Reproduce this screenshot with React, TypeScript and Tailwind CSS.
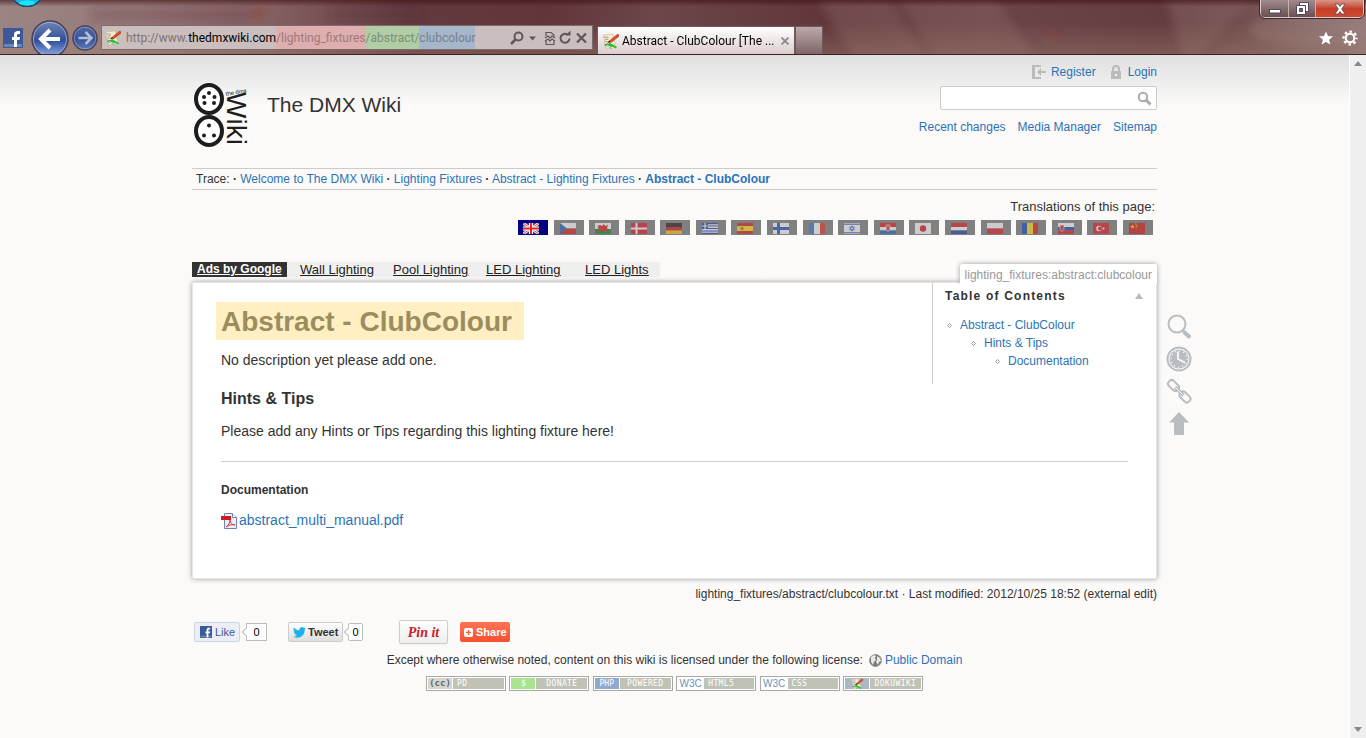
import React from "react";

type IconProps = { className?: string };

const linkStyle = "text-[#2b73b7] hover:underline";

const PencilIcon = ({ className }: IconProps) => (
    <svg viewBox="0 0 16 16" className={className}>
        <path d="M1 2l9-1 3 12-9 2z" fill="#f4ecd0" stroke="#c9b98c" strokeWidth=".6" />
        <path d="M2 4h4M3 6h3M3 8h2" stroke="#8a8a8a" strokeWidth=".8" />
        <path d="M15 1L8 6.500l-2.500 2.500 3.500-.5L16 3z" fill="#e8502b" stroke="#9b2d12" strokeWidth=".6" />
        <path d="M5.500 9l1.500-2 1 1.200z" fill="#222" />
        <path d="M2 11c3-2 5-1 8 1l-1 3-3-2c-1.500-.5-3-.5-4-2z" fill="#3aa63a" />
        <path d="M7 9l7 4-1 1.500-7-4z" fill="#2fc12f" />
        <path d="M4 11.500l6 2.500" stroke="#fff" strokeWidth=".8" />
    </svg>
);

const FacebookIcon = ({ className }: IconProps) => (
    <svg viewBox="0 0 20 20" className={className}>
        <rect width="20" height="20" fill="#3b5998" />
        <rect y="16" x="1" width="18" height="3" fill="#6d84b4" />
        <path d="M11 19v-7H9V9h2V7c0-3 1.500-4 4-4h2v3h-1.500C14.300 6 14 6.500 14 7.500V9h3l-.4 3H14v7z" fill="#fff" />
    </svg>
);

const ChromeBackground = () => (
    <svg
        viewBox="0 0 1366 55"
        preserveAspectRatio="none"
        className="absolute inset-0 -z-10 h-full w-full"
    >
        <defs>
            <linearGradient id="glass">
                <stop offset="0" stopColor="#9b8583" />
                <stop offset=".1" stopColor="#967a79" />
                <stop offset=".2" stopColor="#845f61" />
                <stop offset=".3" stopColor="#623a3e" />
                <stop offset=".4" stopColor="#61363b" />
                <stop offset=".48" stopColor="#6c464a" />
                <stop offset=".6" stopColor="#61373b" />
                <stop offset=".72" stopColor="#6c4549" />
                <stop offset=".85" stopColor="#653d41" />
                <stop offset=".93" stopColor="#785655" />
                <stop offset="1" stopColor="#93797a" />
            </linearGradient>
            <linearGradient id="shade" x2="0" y2="1">
                <stop offset="0" stopColor="#3d0f12" stopOpacity=".6" />
                <stop offset=".12" stopColor="#3d0f12" stopOpacity="0" />
                <stop offset=".4" stopColor="#a08070" stopOpacity="0" />
                <stop offset="1" stopColor="#a08070" stopOpacity=".4" />
            </linearGradient>
            <filter id="soft" x="-20%" y="-50%" width="140%" height="200%">
                <feGaussianBlur stdDeviation="4" />
            </filter>
        </defs>
        <rect width="1366" height="55" fill="url(#glass)" />
        <g filter="url(#soft)">
            <path d="M90 8h160v14H90zM330 8h90v12h-90z" fill="#552c30" opacity=".2" />
            <path d="M815-5h72l42 65h-74z" fill="#85605f" opacity=".45" />
            <path d="M895-5h100l40 65H935z" fill="#85605f" opacity=".45" />
            <path d="M1165-5h90l-60 65h-10z" fill="#8a6866" opacity=".4" />
            <ellipse cx="1310" cy="30" rx="60" ry="18" fill="#a58c8b" opacity=".3" />
            <circle cx="258" cy="13" r="6" fill="#8b3c28" opacity=".5" />
            <circle cx="1053" cy="38" r="5" fill="#8f2b35" opacity=".6" />
            <circle cx="1050" cy="44" r="4" fill="#3a6a43" opacity=".5" />
        </g>
        <rect width="1366" height="55" fill="url(#shade)" />
        <circle cx="27" cy="-10" r="16.500" fill="#1cb5e4" stroke="#1b4a6b" strokeWidth="1.500" />
        <ellipse cx="27" cy="3" rx="8" ry="2.500" fill="#19e6ff" />
    </svg>
);

const urlParts = [
    { text: "http://www.", style: "text-[#7d7373]" },
    { text: "thedmxwiki.com", style: "text-black" },
    { text: "/lighting_fixtures", style: "bg-[#dfaeae] text-[#9d7b7b]" },
    { text: "/abstract/", style: "bg-[#b0cda6] text-[#7b8f76]" },
    { text: "clubcolour", style: "bg-[#a6b6cb] text-[#76808f]" },
];

const BrowserChrome = () => (
    <header className="relative isolate flex h-[55px] items-end overflow-hidden border-b border-[#3b2024] pl-[3px] font-[Roboto,'Open_Sans',sans-serif] text-[12px]">
        <ChromeBackground />
        <button aria-label="Facebook" className="mb-[6px] h-[20px] w-[20px] shrink-0 rounded-sm">
            <FacebookIcon className="h-[20px] w-[20px]" />
        </button>
        <button aria-label="Back" className="-mb-[2px] ml-[8px] h-[36px] w-[38px] shrink-0">
            <svg viewBox="0 0 38 36" className="h-[36px] w-[38px]">
                <defs>
                    <linearGradient id="back" x2="0" y2="1">
                        <stop offset="0" stopColor="#7286b6" />
                        <stop offset=".5" stopColor="#37539a" />
                        <stop offset=".55" stopColor="#2f4f9c" />
                        <stop offset="1" stopColor="#93b0e6" />
                    </linearGradient>
                </defs>
                <circle cx="19" cy="19" r="18" fill="url(#back)" stroke="#4a4156" strokeWidth="1.500" />
                <circle cx="19" cy="19" r="16.500" fill="none" stroke="#b3bddb" strokeOpacity=".7" />
                <path d="M19 10l-9 9 9 9M10.500 19h18.500" fill="none" stroke="#fff" strokeWidth="4" />
            </svg>
        </button>
        <button aria-label="Forward" className="mb-[3px] ml-[3px] h-[26px] w-[26px] shrink-0">
            <svg viewBox="0 0 26 26" className="h-[26px] w-[26px]">
                <circle cx="13" cy="13" r="12" fill="url(#back)" stroke="#4a4156" strokeWidth="1.500" />
                <circle cx="13" cy="13" r="10.800" fill="#3c5799" fillOpacity=".6" stroke="#98a6cd" strokeOpacity=".6" />
                <path d="M13.500 7l6 6-6 6M19 13H6.500" fill="none" stroke="#b4bdd3" strokeWidth="2.500" />
            </svg>
        </button>
        <div className="mb-[4px] ml-[3px] flex h-[25px] w-[492px] shrink-0 items-center border border-[#7d6b6c] bg-[#cbbebe]">
            <PencilIcon className="mx-[3px] h-[16px] w-[16px]" />
            <div className="flex h-full pl-[2px]">
                {urlParts.map(({ text, style }) => (
                    <span key={text} className={`flex h-full items-center ${style}`}>
                        {text}
                    </span>
                ))}
            </div>
            <svg viewBox="0 0 80 16" className="mr-[3px] ml-auto h-[16px] w-[80px]" fill="none" stroke="#5f5757" strokeWidth="2">
                <circle cx="9.500" cy="6.500" r="4" />
                <path d="M6.500 9.500L2 14" strokeWidth="2.500" />
                <path d="M20 6.500h7l-3.500 4z" fill="#5f5757" stroke="none" />
                <path d="M37 6V2.500h5l3 2.500v1.500M36 8l3-2 2 2 2-2 3 2M36 11l3-2 2 2 2-2 3 2M37 10.500v4h8v-4" strokeWidth="1.200" />
                <path d="M60.500 8.500a4.500 4.500 0 1 1-2-4" />
                <path d="M56.500 5.500h5v-5z" fill="#5f5757" stroke="none" />
                <path d="M68 3.500l9 9M77 3.500l-9 9" strokeWidth="2.200" />
            </svg>
        </div>
        <div className="ml-[4px] flex h-[28px] w-[198px] shrink-0 items-center border border-b-0 border-[#6b5a5b] bg-linear-to-b from-white to-[#dccdce] pt-[1px] pl-[4px]">
            <PencilIcon className="mr-[3px] h-[17px] w-[17px] shrink-0" />
            <span className="text-black whitespace-nowrap">Abstract - ClubColour [The ...</span>
            <button aria-label="Close tab" className="mr-[5px] ml-auto">
                <svg viewBox="0 0 8 8" className="h-[8px] w-[8px]">
                    <path d="M.5.5l7 7M7.500.5l-7 7" stroke="#8f8787" strokeWidth="1.800" />
                </svg>
            </button>
        </div>
        <button
            aria-label="New tab"
            className="h-[28px] w-[28px] shrink-0 border border-b-0 border-[#6b5a5b] bg-linear-to-b from-[#bba9aa] to-[#7f6668]"
        />
        <div className="ml-auto flex flex-col items-end self-stretch">
            <div className="mr-[2px] flex h-[18px] w-[104px] overflow-hidden rounded-b-[5px] border border-t-0 border-[#d9cccc] outline outline-[#3f2628]">
                <button aria-label="Minimize" className="flex w-[28px] items-center justify-center border-r border-[#c4b3b3] bg-linear-to-b from-[#a08c8d] to-[#6a4f51]">
                    <svg viewBox="0 0 12 12" className="h-[12px] w-[12px]">
                        <rect x=".5" y="6.500" width="11" height="3.500" fill="#fff" stroke="#4f4a5c" />
                    </svg>
                </button>
                <button aria-label="Restore" className="flex w-[27px] items-center justify-center border-r border-[#c4b3b3] bg-linear-to-b from-[#a08c8d] to-[#6a4f51]">
                    <svg viewBox="0 0 13 13" className="h-[13px] w-[13px]" fill="#fff" stroke="#4f4a5c">
                        <path d="M3.500.5h9v9h-9z" />
                        <path d="M.5 3.500h9v9h-9z" />
                        <path d="M3.500 6.500h3v3h-3z" fill="#7b6263" />
                    </svg>
                </button>
                <button aria-label="Close" className="flex flex-1 items-center justify-center bg-linear-to-b from-[#d9958a] via-[#c4402c] to-[#d2492f]">
                    <svg viewBox="0 0 12 12" className="h-[12px] w-[12px]">
                        <path d="M1 1h3.200L6 3.500 7.800 1H11L7.700 6l3.300 5H7.800L6 8.500 4.200 11H1l3.300-5z" fill="#fff" stroke="#4f4a5c" strokeWidth=".8" />
                    </svg>
                </button>
            </div>
            <div className="mt-[12px] mr-[8px] flex gap-[8px]">
                <button aria-label="Favorites">
                    <svg viewBox="0 0 16 16" className="h-[16px] w-[16px]">
                        <path d="M8 .5l2.200 5.200 5.600.4-4.300 3.700 1.400 5.500L8 12.300l-4.900 3 1.400-5.500L.2 6.100l5.600-.4z" fill="#fff" stroke="#6b5557" strokeWidth=".5" />
                    </svg>
                </button>
                <button aria-label="Tools">
                    <svg viewBox="0 0 16 16" className="h-[16px] w-[16px]" fill="none" stroke="#fff">
                        <circle cx="8" cy="8" r="4.300" strokeWidth="2.200" />
                        <circle cx="8" cy="8" r="6.500" strokeWidth="2.200" strokeDasharray="2.600 2.505" strokeDashoffset="1.300" />
                    </svg>
                </button>
            </div>
        </div>
    </header>
);

const Logo = () => (
    <svg viewBox="0 0 58 66" className="h-[66px] w-[58px] overflow-visible" fill="#1f1c1d">
        <ellipse cx="17" cy="16" rx="13" ry="14" fill="#fff" stroke="#1f1c1d" strokeWidth="4" />
        <ellipse cx="17" cy="48" rx="13" ry="14" fill="#fff" stroke="#1f1c1d" strokeWidth="4" />
        <circle cx="17" cy="10" r="2" />
        <circle cx="12" cy="14" r="2" />
        <circle cx="22.500" cy="14" r="2" />
        <circle cx="12.500" cy="20" r="2" />
        <circle cx="22" cy="20" r="2" />
        <circle cx="17" cy="42.500" r="2" />
        <circle cx="12" cy="52.500" r="2" />
        <circle cx="22" cy="52.500" r="2" />
        <text transform="translate(35 9) rotate(90)" fontFamily="Liberation Sans, sans-serif" fontSize="28">
            Wiki
        </text>
        <text transform="translate(34 13) rotate(-10)" fontFamily="Liberation Sans, sans-serif" fontSize="6">
            the dmx
        </text>
    </svg>
);

const SiteHeader = () => (
    <div className="flex justify-between pt-2 text-[12px] leading-[18px]">
        <div className="flex items-start pt-[20px]">
            <Logo />
            <h1 className="mt-[9px] ml-[17px] text-[21px] leading-[26px] text-[#333]">The DMX Wiki</h1>
        </div>
        <div className="flex flex-col items-end">
            <div className="flex">
                <a href="#register" className={`flex items-center ${linkStyle}`}>
                    <svg viewBox="0 0 14 14" className="mr-[5px] h-[14px] w-[14px]" fill="#bbb">
                        <path d="M0 0h9v2H3v10h6v2H0z" />
                        <path d="M5 7l4-4v3h5v2H9v3z" />
                    </svg>
                    Register
                </a>
                <a href="#login" className={`ml-[15px] flex items-center ${linkStyle}`}>
                    <svg viewBox="0 0 10 14" className="mr-[7px] h-[14px] w-[10px]" fill="#bbb">
                        <path d="M2 7V4a3 3 0 0 1 6 0v3" fill="none" stroke="#bbb" strokeWidth="2" />
                        <path d="M0 6h10v8H0z" />
                        <path d="M4 9h2v2H4z" fill="#f5f5f4" />
                    </svg>
                    Login
                </a>
            </div>
            <form className="mt-[5px] flex h-[24px] w-[217px] items-center rounded-[2px] border border-[#ccc] bg-white">
                <input type="text" aria-label="Search" className="h-full min-w-0 flex-1 px-1 outline-none" />
                <button type="button" aria-label="Search" className="mr-[4px]">
                    <svg viewBox="0 0 15 15" className="h-[15px] w-[15px]" fill="none" stroke="#aaa">
                        <circle cx="6" cy="6" r="4.200" strokeWidth="2" />
                        <path d="M9 9l4.500 4.500" strokeWidth="3" />
                    </svg>
                </button>
            </form>
            <nav className="mt-2 flex gap-3">
                <a href="#recent" className={linkStyle}>Recent changes</a>
                <a href="#media" className={linkStyle}>Media Manager</a>
                <a href="#index" className={linkStyle}>Sitemap</a>
            </nav>
        </div>
    </div>
);

const trace = ["Welcome to The DMX Wiki", "Lighting Fixtures", "Abstract - Lighting Fixtures"];

const Breadcrumbs = () => (
    <nav className="mt-[19px] h-[22px] border-y border-[#ccc] px-1 text-[12px] leading-5">
        Trace:{" "}
        {trace.map((page) => (
            <React.Fragment key={page}>
                <span className="font-bold">·</span>{" "}
                <a href="#trace" className={linkStyle}>{page}</a>{" "}
            </React.Fragment>
        ))}
        <span className="font-bold">·</span>{" "}
        <a href="#current" className={`font-bold ${linkStyle}`}>Abstract - ClubColour</a>
    </nav>
);

const flags: { name: string; art: React.ReactNode }[] = [
    {
        name: "English",
        art: (
            <>
                <path d="M0 0h16v11H0z" fill="#2b3fa0" />
                <path d="M0 0l16 11M16 0L0 11" stroke="#fff" strokeWidth="2.500" />
                <path d="M0 0l16 11M16 0L0 11" stroke="#e33" strokeWidth="1" />
                <path d="M8 0v11M0 5.500h16" stroke="#fff" strokeWidth="4" />
                <path d="M8 0v11M0 5.500h16" stroke="#e22" strokeWidth="2" />
            </>
        ),
    },
    {
        name: "Czech",
        art: (
            <>
                <path d="M0 0h16v5.500H0z" fill="#fff" />
                <path d="M0 5.500h16V11H0z" fill="#e02020" />
                <path d="M0 0l7 5.500L0 11z" fill="#2a62b4" />
            </>
        ),
    },
    {
        name: "Welsh",
        art: (
            <>
                <path d="M0 0h16v6H0z" fill="#fff" />
                <path d="M0 6h16v5H0z" fill="#1b8a2b" />
                <path d="M2 3l3-1 2 1 2-2 1 2 3-1-1 3 2 2-2 2-2-2-2 2-3-1-2 1 1-3-2-1 2-1z" fill="#d22" />
            </>
        ),
    },
    {
        name: "Danish",
        art: (
            <>
                <path d="M0 0h16v11H0z" fill="#dd1c2c" />
                <path d="M5.500 0v11M0 5.500h16" stroke="#fff" strokeWidth="2" />
            </>
        ),
    },
    {
        name: "German",
        art: (
            <>
                <path d="M0 0h16v4H0z" fill="#222" />
                <path d="M0 4h16v3.500H0z" fill="#e01818" />
                <path d="M0 7.500h16V11H0z" fill="#f5c51c" />
            </>
        ),
    },
    {
        name: "Greek",
        art: (
            <>
                <path d="M0 0h16v11H0z" fill="#fff" />
                <path d="M0 .6h16M0 3h16M0 5.500h16M0 8h16M0 10.400h16" stroke="#2443b8" strokeWidth="1.200" />
                <path d="M0 0h6v6H0z" fill="#2443b8" />
                <path d="M3 0v6M0 3h6" stroke="#fff" strokeWidth="1.200" />
            </>
        ),
    },
    {
        name: "Spanish",
        art: (
            <>
                <path d="M0 0h16v11H0z" fill="#dd2020" />
                <path d="M0 3h16v5H0z" fill="#ffe01c" />
                <circle cx="5" cy="5.500" r="1.700" fill="#c9731c" />
            </>
        ),
    },
    {
        name: "Finnish",
        art: (
            <>
                <path d="M0 0h16v11H0z" fill="#fff" />
                <path d="M5.500 0v11M0 5.500h16" stroke="#2858b8" strokeWidth="3" />
            </>
        ),
    },
    {
        name: "French",
        art: (
            <>
                <path d="M0 0h16v11H0z" fill="#fff" />
                <path d="M0 0h5v11H0z" fill="#3f78cf" />
                <path d="M11 0h5v11h-5z" fill="#e23a2a" />
            </>
        ),
    },
    {
        name: "Hebrew",
        art: (
            <>
                <path d="M0 0h16v11H0z" fill="#fff" />
                <path d="M0 1.200h16M0 9.800h16" stroke="#2b50b8" />
                <path d="M8 2.800l2.300 4H5.700zM8 8.200l2.300-4H5.700z" fill="none" stroke="#3b62cc" strokeWidth=".8" />
            </>
        ),
    },
    {
        name: "Croatian",
        art: (
            <>
                <path d="M0 0h16v4H0z" fill="#e02020" />
                <path d="M0 4h16v3.500H0z" fill="#fff" />
                <path d="M0 7.500h16V11H0z" fill="#2068b8" />
                <path d="M6 2h4v5L8 8.500 6 7z" fill="#e04a3a" stroke="#fff" strokeWidth=".6" />
            </>
        ),
    },
    {
        name: "Japanese",
        art: (
            <>
                <path d="M0 0h16v11H0z" fill="#fff" />
                <circle cx="8" cy="5.500" r="3.200" fill="#d81c2c" />
            </>
        ),
    },
    {
        name: "Dutch",
        art: (
            <>
                <path d="M0 0h16v4H0z" fill="#e02020" />
                <path d="M0 4h16v3.500H0z" fill="#fff" />
                <path d="M0 7.500h16V11H0z" fill="#1c4aa8" />
            </>
        ),
    },
    {
        name: "Polish",
        art: (
            <>
                <path d="M0 0h16v5.500H0z" fill="#fff" />
                <path d="M0 5.500h16V11H0z" fill="#e02030" />
            </>
        ),
    },
    {
        name: "Romanian",
        art: (
            <>
                <path d="M0 0h16v11H0z" fill="#ffe01c" />
                <path d="M0 0h5v11H0z" fill="#1c48c0" />
                <path d="M11 0h5v11h-5z" fill="#e02020" />
            </>
        ),
    },
    {
        name: "Slovenian",
        art: (
            <>
                <path d="M0 0h16v4H0z" fill="#fff" />
                <path d="M0 4h16v3.500H0z" fill="#2048c0" />
                <path d="M0 7.500h16V11H0z" fill="#e02020" />
                <path d="M2 2h4v4.500L4 8.500l-2-2z" fill="#e03030" stroke="#fff" strokeWidth=".6" />
            </>
        ),
    },
    {
        name: "Turkish",
        art: (
            <>
                <path d="M0 0h16v11H0z" fill="#e02028" />
                <circle cx="6" cy="5.500" r="2.800" fill="#fff" />
                <circle cx="6.900" cy="5.500" r="2" fill="#e02028" />
                <circle cx="10.500" cy="5.500" r="1.100" fill="#fff" />
            </>
        ),
    },
    {
        name: "Chinese",
        art: (
            <>
                <path d="M0 0h16v11H0z" fill="#d81c1c" />
                <path d="M3.500 1.500l.7 1.500h1.600L4.500 4l.5 1.600-1.500-1L2 5.600 2.500 4 1.200 3h1.600z" fill="#ffe01c" />
                <path d="M6 1h1.500M7 3h1.500M6.500 5h1" stroke="#ffe01c" />
            </>
        ),
    },
];

const Translations = () => (
    <div className="mt-2 flex flex-col items-end">
        <p className="mr-[2px] text-[13px] leading-[18px]">Translations of this page:</p>
        <ul className="mt-1 mr-[4px] flex w-[635px] justify-between">
            {flags.map(({ name, art }) => {
                const isCurrent = name === "English";
                return (
                    <li key={name}>
                        <a
                            href={`#${name}`}
                            aria-label={name}
                            className={`flex h-[15px] w-[30px] items-center pt-[2px] ${
                                isCurrent ? "bg-[#000080] pl-[5px]" : "bg-[#808080] pl-[6px]"
                            }`}
                        >
                            <svg viewBox="0 0 16 11" className={`h-[11px] w-[16px] ${isCurrent ? "" : "opacity-60"}`}>
                                {art}
                            </svg>
                        </a>
                    </li>
                );
            })}
        </ul>
    </div>
);

const AdLinks = () => (
    <div className="mt-[27px] flex h-[15px] w-[468px] bg-[#efefef] text-[13px] leading-[15px] text-[#222] underline">
        <a href="#ads" className="mr-[13px] w-[95px] bg-[#333] pl-[5px] text-[12px] font-bold text-white">
            Ads by Google
        </a>
        <a href="#wall" className="w-[93px]">Wall Lighting</a>
        <a href="#pool" className="w-[93px]">Pool Lighting</a>
        <a href="#led" className="w-[99px]">LED Lighting</a>
        <a href="#lights">LED Lights</a>
    </div>
);

const TocItem = ({ label, children }: { label: string; children?: React.ReactNode }) => (
    <li>
        <div className="flex items-center">
            <svg viewBox="0 0 5 5" className="mr-[8px] h-[5px] w-[5px]">
                <path d="M2.500.5l2 2-2 2-2-2z" fill="none" stroke="#999" />
            </svg>
            <a href="#section" className={linkStyle}>{label}</a>
        </div>
        {children && <ul className="pl-[24px]">{children}</ul>}
    </li>
);

const TableOfContents = () => (
    <aside className="h-[101px] w-[224px] shrink-0 border-l border-[#ccc] pl-[12px] text-[12px] leading-[18px]">
        <h3 className="flex items-center justify-between pt-[4px] pr-[13px] font-bold tracking-widest">
            Table of Contents
            <svg viewBox="0 0 8 6" className="h-[6px] w-[8px]">
                <path d="M4 0l4 6H0z" fill="#bbb" />
            </svg>
        </h3>
        <ul className="mt-[11px] pl-[2px]">
            <TocItem label="Abstract - ClubColour">
                <TocItem label="Hints & Tips">
                    <TocItem label="Documentation" />
                </TocItem>
            </TocItem>
        </ul>
    </aside>
);

const PageTools = () => (
    <nav className="flex w-[26px] flex-col gap-[6px] pt-[32px]">
        <a href="#source" aria-label="Show pagesource">
            <svg viewBox="0 0 26 26" className="h-[26px] w-[26px]" fill="none" stroke="#b9bcc1">
                <circle cx="11" cy="10" r="8.500" strokeWidth="2" />
                <path d="M16.500 16l3 3" strokeWidth="2" />
                <path d="M18.500 18.500l4.500 4" strokeWidth="4" strokeLinecap="round" />
            </svg>
        </a>
        <a href="#revisions" aria-label="Old revisions">
            <svg viewBox="0 0 26 26" className="h-[26px] w-[26px]" fill="none" stroke="#b9bcc1">
                <circle cx="13" cy="13" r="11.500" strokeWidth="2" />
                <circle cx="13" cy="13" r="9.500" fill="#b9bcc1" stroke="none" />
                <circle cx="13" cy="13" r="8" stroke="#fbfaf9" strokeWidth="1.500" strokeDasharray="1 3.189" />
                <path d="M12 5.500V13l7 3.500" stroke="#fbfaf9" strokeWidth="1.800" />
            </svg>
        </a>
        <a href="#backlinks" aria-label="Backlinks">
            <svg viewBox="0 0 26 26" className="h-[26px] w-[26px]" fill="none" stroke="#b9bcc1" strokeWidth="2">
                <rect x="-6" y="-3.500" width="12" height="7" rx="3" transform="translate(7.500 7.500) rotate(45)" />
                <rect x="-6" y="-3.500" width="12" height="7" rx="3" transform="translate(19 19) rotate(45)" />
                <path d="M9 9l8.500 8.500" strokeWidth="3.500" />
                <path d="M9 9l8.500 8.500" stroke="#fbfaf9" strokeWidth="1" />
            </svg>
        </a>
        <a href="#top" aria-label="Back to top">
            <svg viewBox="0 0 26 26" className="h-[26px] w-[26px]">
                <path d="M13 2l10 10.500h-5V25H8V12.500H3z" fill="#b9bcc1" />
            </svg>
        </a>
    </nav>
);

const PageContent = () => (
    <div className="mt-[5px] -mr-[35px] flex gap-[9px]">
        <main className="relative flex flex-1 justify-between rounded-[2px] border border-[#e6e6e6] bg-white shadow-[0_0_5px_#999]">
            <div className="absolute -top-[19px] -right-px h-[20px] overflow-hidden rounded-t-[2px] bg-white px-[5px] text-[12px] leading-[22px] text-[#999] shadow-[0_0_5px_#999] [clip-path:inset(-5px_-5px_0_-5px)]">
                lighting_fixtures:abstract:clubcolour
            </div>
            <div className="min-w-0 flex-1 pt-[19px] pb-[47px] pl-[28px] text-[14px] leading-[21px]">
                <h1 className="-ml-[5px] w-fit bg-[#ffefc3] pt-[2px] pr-[12px] pl-[5px] text-[28px] leading-[36px] font-bold text-[#9c8d5f]">
                    Abstract - ClubColour
                </h1>
                <p className="mt-[10px]">No description yet please add one.</p>
                <h2 className="mt-[17px] text-[16px] leading-[22px] font-bold">Hints &amp; Tips</h2>
                <p className="mt-[11px]">Please add any Hints or Tips regarding this lighting fixture here!</p>
                <hr className="mt-[19px] -mr-[196px] border-[#ccc]" />
                <h3 className="mt-[19px] text-[12px] leading-[18px] font-bold">Documentation</h3>
                <a href="#pdf" className={`mt-[11px] flex w-fit items-center ${linkStyle}`}>
                    <svg viewBox="0 0 16 16" className="mr-[2px] h-[16px] w-[16px]">
                        <path d="M3.500.5h8l4 4v11h-12z" fill="#e8eefb" stroke="#7183a8" />
                        <path d="M11.500.5v4h4" fill="#fff" stroke="#7183a8" />
                        <path d="M0 3h10v4H0z" fill="#d41a1a" />
                        <path d="M5 14c3-2 4-5 4-7 0 3 2 5 5 5-3-1-6 0-9 2z" fill="none" stroke="#e03a3a" />
                    </svg>
                    abstract_multi_manual.pdf
                </a>
            </div>
            <TableOfContents />
        </main>
        <PageTools />
    </div>
);

const CountBubble = ({ className }: IconProps) => (
    <span className={`relative flex h-[18px] items-center justify-center border border-[#bbb] bg-white text-[11px] text-black ${className}`}>
        <span className="absolute top-[5px] -left-[4px] h-[6px] w-[6px] rotate-45 border-b border-l border-[#bbb] bg-white" />
        0
    </span>
);

const ShareButtons = () => (
    <div className="mt-[17px] ml-[2px] flex h-[24px] items-center text-[11px]">
        <button className="flex h-[20px] w-[46px] items-center rounded-[2px] border border-[#cad4e7] bg-[#eceef5] pl-[5px] text-[#3b5998]">
            <FacebookIcon className="mr-[3px] h-[12px] w-[12px]" />
            Like
        </button>
        <CountBubble className="ml-[6px] w-[21px]" />
        <button className="ml-[21px] flex h-[20px] w-[55px] items-center rounded-[2px] border border-[#ccc] bg-linear-to-b from-white to-[#dedede] pl-[4px] font-bold text-[#333]">
            <svg viewBox="0 0 24 20" className="mr-[2px] h-[11px] w-[13px] shrink-0">
                <path d="M24 2.400a9.800 9.800 0 0 1-2.800.8A4.900 4.900 0 0 0 23.300.5a9.900 9.900 0 0 1-3.100 1.200 4.900 4.900 0 0 0-8.400 4.500A14 14 0 0 1 1.700 1.100a4.900 4.900 0 0 0 1.500 6.500 4.900 4.900 0 0 1-2.200-.6 4.900 4.900 0 0 0 3.900 4.900 5 5 0 0 1-2.200.1 4.900 4.900 0 0 0 4.600 3.400A9.900 9.900 0 0 1 0 17.500 14 14 0 0 0 21.500 5 10 10 0 0 0 24 2.400z" fill="#1bb0e8" />
            </svg>
            Tweet
        </button>
        <CountBubble className="ml-[5px] w-[15px] rounded-[2px]" />
        <button className="ml-[36px] h-[24px] w-[49px] rounded-[2px] border border-[#ccc] bg-linear-to-b from-white to-[#eee] font-['Liberation_Serif',serif] text-[14px] font-bold text-[#cb2027] italic shadow-xs">
            Pin it
        </button>
        <button className="ml-[12px] flex h-[20px] w-[50px] items-center rounded-[2px] bg-linear-to-b from-[#fc7354] to-[#f8502c] pl-[4px] font-bold text-white">
            <svg viewBox="0 0 9 9" className="mr-[3px] h-[9px] w-[9px] shrink-0">
                <rect width="9" height="9" rx="2" fill="#fff" />
                <path d="M4.500 2v5M2 4.500h5" stroke="#fc6a45" strokeWidth="1.400" />
            </svg>
            Share
        </button>
    </div>
);

const badges: { label: React.ReactNode; labelStyle: string; text: string; align: string }[] = [
    {
        label: <span className="text-[9px] font-bold">(cc)</span>,
        labelStyle: "w-[24px] bg-[#d5d6cf] text-[#666]",
        text: "PD",
        align: "pl-[4px]",
    },
    { label: "$", labelStyle: "w-[24px] bg-[#abe48f] text-white", text: "DONATE", align: "justify-center" },
    { label: "PHP", labelStyle: "w-[24px] bg-[#90a9cf] text-white", text: "POWERED", align: "justify-center" },
    {
        label: <span className="font-['Liberation_Sans',sans-serif] text-[10px]">W3C</span>,
        labelStyle: "w-[25px] bg-white text-[#6a8fc0]",
        text: "HTML5",
        align: "pl-[4px]",
    },
    {
        label: <span className="font-['Liberation_Sans',sans-serif] text-[10px]">W3C</span>,
        labelStyle: "w-[25px] bg-white text-[#6a8fc0]",
        text: "CSS",
        align: "pl-[4px]",
    },
    {
        label: <PencilIcon className="h-[12px] w-[14px]" />,
        labelStyle: "w-[24px] bg-[#a9b8c2]",
        text: "DOKUWIKI",
        align: "justify-center",
    },
];

const Footer = () => (
    <footer className="mt-[7px] flex flex-col items-center text-[12px] leading-[18px]">
        <p className="flex items-center">
            Except where otherwise noted, content on this wiki is licensed under the following license:
            <svg viewBox="0 0 13 13" className="mr-[3px] ml-[6px] h-[13px] w-[13px]">
                <circle cx="6.500" cy="6.500" r="6" fill="#777" stroke="#999" />
                <path d="M2 3l3-2 2 1-1 2 1 2-2 2-1 3-2-3zM8 2l3 2 1 3-2 1-1 3-2-3 1-2z" fill="#e8e8e8" />
            </svg>
            <a href="#license" className={linkStyle}>Public Domain</a>
        </p>
        <div className="mt-[7px] flex w-[497px] justify-between font-['DejaVu_Sans_Mono',monospace] text-[8px] leading-[11px] text-white">
            {badges.map(({ label, labelStyle, text, align }) => (
                <a key={text} href={`#${text}`} className="flex h-[15px] w-[80px] gap-px border border-[#a9a9a3] bg-white p-px">
                    <span className={`flex items-center justify-center ${labelStyle}`}>{label}</span>
                    <span className={`flex flex-1 items-center bg-[#c1c2b6] tracking-wider ${align}`}>{text}</span>
                </a>
            ))}
        </div>
    </footer>
);

const ScrollBar = () => (
    <div className="flex w-[17px] shrink-0 flex-col items-center justify-between border-l border-white bg-[#efeff0] py-[6px]">
        <svg viewBox="0 0 8 5" className="h-[5px] w-[8px]">
            <path d="M4 0l4 5H0z" fill="#888" />
        </svg>
        <svg viewBox="0 0 8 5" className="h-[5px] w-[8px]">
            <path d="M4 5L0 0h8z" fill="#888" />
        </svg>
    </div>
);

export default function App() {
    return (
        <div className="flex min-h-screen flex-col bg-[#fbfaf9] font-['Liberation_Sans',Arial,sans-serif] text-[#333]">
            <BrowserChrome />
            <div className="flex flex-1">
                <div className="flex-1 bg-linear-to-b from-[#dfdfdf] to-[#fbfaf9] to-[50px] px-10 pb-6">
                    <div className="mx-auto max-w-[965px]">
                        <SiteHeader />
                        <Breadcrumbs />
                        <Translations />
                        <AdLinks />
                        <PageContent />
                        <p className="mt-[6px] text-right text-[12px] leading-[18px]">
                            lighting_fixtures/abstract/clubcolour.txt · Last modified: 2012/10/25 18:52 (external edit)
                        </p>
                        <ShareButtons />
                        <Footer />
                    </div>
                </div>
                <ScrollBar />
            </div>
        </div>
    );
}
